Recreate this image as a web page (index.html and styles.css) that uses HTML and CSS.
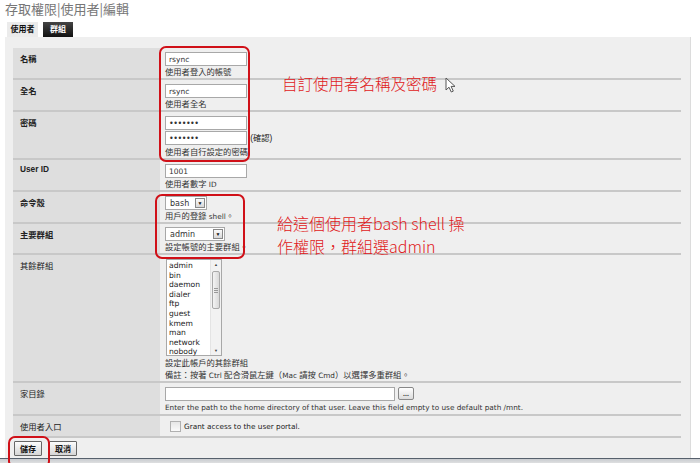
FILE: index.html
```html
<!DOCTYPE html>
<html lang="zh-Hant">
<head>
  <meta charset="UTF-8">
  <title>存取權限|使用者|編輯</title>
  <link rel="stylesheet" href="styles.css">
</head>
<body>
<div class="page">
  <h1 class="title">存取權限|使用者|編輯</h1>
  <div class="tabs">
    <span class="tab">使用者</span>
    <span class="tab active">群組</span>
  </div>

  <div class="panel">
    <table class="form">
      <tr>
        <td class="lbl strong">名稱</td>
        <td class="val"><input class="txt" type="text" value="rsync"><div class="help">使用者登入的帳號</div></td>
      </tr>
      <tr>
        <td class="lbl strong">全名</td>
        <td class="val"><input class="txt" type="text" value="rsync"><div class="help">使用者全名</div></td>
      </tr>
      <tr>
        <td class="lbl strong">密碼</td>
        <td class="val">
          <div class="line"><input class="txt" type="password" value="1234567"></div>
          <div class="line"><input class="txt" type="password" value="1234567"> <span class="note">(確認)</span></div>
          <div class="help">使用者自行設定的密碼</div>
        </td>
      </tr>
      <tr>
        <td class="lbl strong">User ID</td>
        <td class="val"><input class="txt" type="text" value="1001"><div class="help">使用者數字 <span class="lat">ID</span></div></td>
      </tr>
      <tr>
        <td class="lbl strong">命令殼</td>
        <td class="val">
          <div class="sel sel-sm"><span class="sel-text">bash</span><span class="sel-btn">▼</span></div>
          <div class="help">用戶的登錄 <span class="lat">shell</span>。</div>
        </td>
      </tr>
      <tr>
        <td class="lbl strong">主要群組</td>
        <td class="val tight">
          <div class="sel sel-md"><span class="sel-text">admin</span><span class="sel-btn">▼</span></div>
          <div class="help">設定帳號的主要群組。</div>
        </td>
      </tr>
      <tr>
        <td class="lbl">其餘群組</td>
        <td class="val">
          <div class="listbox">
            <ul class="items">
              <li>admin</li><li>bin</li><li>daemon</li><li>dialer</li><li>ftp</li>
              <li>guest</li><li>kmem</li><li>man</li><li>network</li><li>nobody</li>
            </ul>
            <div class="scrollbar">
              <span class="arrow">▲</span>
              <div class="track"><div class="thumb"><i></i><i></i><i></i></div></div>
              <span class="arrow">▼</span>
            </div>
          </div>
          <div class="help">設定此帳戶的其餘群組<br>備註：按著 <span class="lat">Ctrl</span> 配合滑鼠左鍵（<span class="lat">Mac</span> 請按 <span class="lat">Cmd</span>）以選擇多重群組。</div>
        </td>
      </tr>
      <tr>
        <td class="lbl">家目錄</td>
        <td class="val">
          <div class="line"><input class="txt txt-wide" type="text" value=""><button class="dots">...</button></div>
          <div class="help en">Enter the path to the home directory of that user. Leave this field empty to use default path /mnt.</div>
        </td>
      </tr>
      <tr>
        <td class="lbl">使用者入口</td>
        <td class="val check-cell">
          <div class="check-row"><span class="checkbox"></span><span class="en">Grant access to the user portal.</span></div>
        </td>
      </tr>
    </table>
    <div class="actions">
      <button class="btn">儲存</button>
      <button class="btn">取消</button>
    </div>
  </div>
  <div class="bottom"></div>

  <!-- annotations drawn over the screenshot -->
  <div class="mark mark-account"></div>
  <div class="callout callout-account">自訂使用者名稱及密碼</div>
  <svg class="cursor" width="11" height="16" viewBox="0 0 11 16">
    <path d="M1 1 L1 13 L4 10.2 L6.3 15 L8.3 14.1 L6.1 9.4 L10 9.4 Z" fill="#fff" stroke="#555" stroke-width="1" stroke-linejoin="round"/>
  </svg>
  <div class="mark mark-shell"></div>
  <div class="callout callout-shell">給這個使用者bash shell 操<br>作權限，群組選admin</div>
  <div class="mark mark-save"></div>
</div>
</body>
</html>
```

FILE: styles.css
```css
body { margin: 0; background: #fff; font-family: "Liberation Sans", "Noto Sans CJK TC", sans-serif; color: #222; }
.page { position: relative; width: 700px; height: 463px; overflow: hidden; }

.title { margin: 0; padding: 0 5px; height: 17px; font-size: 13px; line-height: 18px; font-weight: normal; color: #777; font-family: "Noto Sans CJK TC", sans-serif; }

.tabs { display: flex; gap: 5px; margin: 5px 0 0 7px; }
.tab { width: 31px; height: 15px; line-height: 15px; text-align: center; font-size: 8px; font-weight: bold; background: #ebebeb; color: #111; }
.tab.active { width: 30px; background: linear-gradient(#444, #111); color: #fff; }

.panel { margin-left: 5px; width: 686px; box-sizing: border-box; padding: 11px 9px 0 8px; background: #efefef; border-right: 1px solid #dcdcdc; }

.form { width: 100%; border-collapse: collapse; font-size: 8px; }
.form td { vertical-align: top; border-bottom: 2px solid #c8c8c8; }
.lbl { width: 133px; padding: 4px 7px; background: #dedede; color: #222; font-size: 8.3px; }
.lbl.strong { font-weight: bold; }
.val { padding: 4px 5px 0 5px; }
.val.tight { padding-top: 3px; }

.txt { display: inline-block; vertical-align: top; width: 82px; height: 14px; box-sizing: border-box; margin: 0; padding: 0 3px; border: 1px solid #a8a8a8; background: #fff; font: 7.5px "DejaVu Sans", sans-serif; color: #333; }
.txt[type="password"] { font-size: 8px; letter-spacing: -0.5px; }
.txt-wide { width: 230px; }
.line { margin-bottom: 1px; }
.note { font-size: 8.3px; line-height: 14px; margin-left: 1px; }

.help { font-size: 8.3px; line-height: 12px; color: #333; white-space: nowrap; }
.lat { font-family: "DejaVu Sans", sans-serif; font-size: 7.3px; line-height: 11px; }
.en { font-family: "DejaVu Sans", sans-serif; font-size: 7.3px; }

.sel { display: flex; align-items: center; justify-content: space-between; height: 14px; box-sizing: border-box; border: 1px solid #a8a8a8; background: #fff; padding-left: 4px; }
.sel-sm { width: 42px; }
.sel-md { width: 60px; }
.sel-text { font-family: "DejaVu Sans", sans-serif; font-size: 8px; color: #333; }
.sel-btn { width: 10px; height: 10px; margin-right: 1px; box-sizing: border-box; border: 1px solid #888; background: linear-gradient(#fafafa, #d8d8d8); font-size: 5px; line-height: 8px; text-align: center; color: #111; }

.listbox { display: flex; width: 56px; height: 97px; box-sizing: border-box; margin-left: 1px; margin-bottom: 1px; border: 1px solid #a8a8a8; background: #fff; }
.items { flex: 1; margin: 0; padding: 1px 0 0 2px; list-style: none; font-family: "DejaVu Sans", sans-serif; font-size: 7.6px; line-height: 9.6px; color: #222; }
.scrollbar { display: flex; flex-direction: column; width: 10px; background: #f2f2f2; border-left: 1px solid #e4e4e4; }
.arrow { height: 9px; font-size: 4px; line-height: 9px; text-align: center; color: #444; }
.track { flex: 1; padding: 2px 1px; }
.thumb { display: flex; flex-direction: column; align-items: center; justify-content: center; gap: 1px; height: 36px; border: 1px solid #a9a9a9; border-radius: 2px; background: linear-gradient(to right, #f4f4f4, #d9d9d9); }
.thumb i { display: block; width: 4px; height: 1px; background: #999; }

.dots { vertical-align: top; width: 16px; height: 13px; margin: 0 0 0 3px; padding: 0; border: 1px solid #888; border-radius: 2px; background: linear-gradient(#fff, #dcdcdc); font-size: 7px; line-height: 8px; font-weight: bold; color: #333; }

.val.check-cell { padding: 3px 5px 2px 5px; }
.check-row { display: flex; align-items: center; height: 15px; padding-left: 5px; }
.checkbox { width: 9px; height: 9px; margin-right: 3px; border: 1px solid #b0b0b0; background: linear-gradient(#e6e6e6, #fafafa); }

.actions { display: flex; gap: 7px; padding: 3px 1px 2px; }
.btn { height: 15px; margin: 0; padding: 0 5px; border: 1px solid #666; border-radius: 1px; background: linear-gradient(#fcfcfc, #d6d6d6); font: bold 8px "Noto Sans CJK TC", sans-serif; color: #111; }

.bottom { height: 6px; border-top: 1px solid #56606c; background: linear-gradient(#c9ccd0, #e8e8e8); }

.mark { position: absolute; box-sizing: border-box; border: 2px solid #d01018; border-radius: 7px; }
.mark-account { left: 159px; top: 46px; width: 91px; height: 116px; }
.mark-shell { left: 155px; top: 194px; width: 90px; height: 65px; }
.mark-save { left: 8px; top: 436px; width: 42px; height: 32px; }

.callout { position: absolute; font-family: "Noto Sans CJK TC", sans-serif; color: #e01820; white-space: nowrap; font-weight: 300; }
.callout-account { left: 282px; top: 73px; font-size: 15.5px; line-height: 20px; }
.callout-shell { left: 277px; top: 212px; font-size: 16px; line-height: 23px; }
.cursor { position: absolute; left: 445px; top: 77px; }
```
